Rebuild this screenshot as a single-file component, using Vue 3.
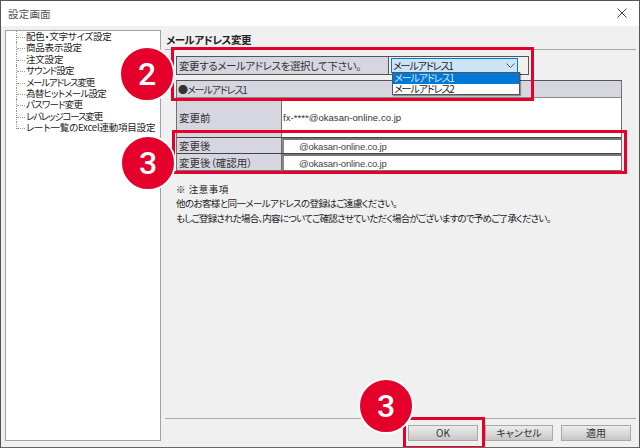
<script setup>
const items = [
  { text: '配色・文字サイズ設定', cls: '' },
  { text: '商品表示設定', cls: '' },
  { text: '注文設定', cls: '' },
  { text: 'サウンド設定', cls: 'snug' },
  { text: 'メールアドレス変更', cls: 'tight' },
  { text: '為替ヒットメール設定', cls: 'snug' },
  { text: 'パスワード変更', cls: 'snug' },
  { text: 'レバレッジコース変更', cls: 'tight' },
  { text: 'レート一覧のExcel連動項目設定', cls: '' }
]
</script>

<template>
  <div class="window">
    <div class="titlebar">
      <span class="title">設定画面</span>
      <svg class="close" width="10" height="10" viewBox="0 0 10 10"><path d="M.5.5l9 9M9.5.5l-9 9" stroke="#444" stroke-width="1" fill="none"/></svg>
    </div>
    <div class="body">
      <div class="tree">
        <ul class="tree-list">
          <li v-for="item in items" :key="item.text" class="tree-item" :class="item.cls">{{ item.text }}</li>
        </ul>
      </div>
      <div class="panel">
        <div class="heading">メールアドレス変更</div>
        <div class="rule"></div>
        <div class="content">
          <div class="select-row">
            <div class="cell label select-label">変更するメールアドレスを選択して下さい。</div>
            <div class="select-cell">
              <div class="select">
                <span class="kana">メールアドレス1</span>
                <svg width="9" height="5" viewBox="0 0 9 5"><path d="M.5.5l4 4 4-4" stroke="#555" fill="none"/></svg>
              </div>
            </div>
          </div>
          <div class="address-table">
            <div class="cell label group"><span class="dot">●</span><span class="kana">メールアドレス1</span></div>
            <div class="before-row">
              <div class="cell label before-label">変更前</div>
              <div class="before-value">fx-****@okasan-online.co.jp</div>
            </div>
            <div class="after-row">
              <div class="cell label after-label">変更後</div>
              <div class="input"><span>@okasan-online.co.jp</span></div>
            </div>
            <div class="after-row last">
              <div class="cell label after-label">変更後（確認用）</div>
              <div class="input"><span>@okasan-online.co.jp</span></div>
            </div>
          </div>
          <div class="notes">
            <p class="note-title">※ 注意事項</p>
            <p>他のお客様と同一メールアドレスの登録はご遠慮ください。</p>
            <p class="long">もしご登録された場合、内容についてご確認させていただく場合がございますので予めご了承ください。</p>
          </div>
        </div>
        <div class="footer">
          <button class="btn ok">OK</button>
          <button class="btn cancel">キャンセル</button>
          <button class="btn apply">適用</button>
        </div>
      </div>
    </div>

    <div class="dropdown">
      <div class="option selected kana">メールアドレス1</div>
      <div class="option kana">メールアドレス2</div>
    </div>

    <div class="redbox box-a"></div>
    <div class="redbox box-b"></div>
    <div class="redbox box-c"></div>
    <div class="badge badge-a">2</div>
    <div class="badge badge-b">3</div>
    <div class="badge badge-c">3</div>
  </div>
</template>

<style>
html, body { margin: 0; padding: 0; background: #f0f0f0; }
</style>

<style scoped>
.window {
  position: relative;
  width: 640px;
  height: 448px;
  box-sizing: border-box;
  overflow: hidden;
  border: 1px solid #555;
  border-bottom-color: #666;
  background: #f0f0f0;
  color: #333;
  font-family: "Noto Sans CJK JP", "Noto Sans", sans-serif;
  font-size: 10.5px;
  font-feature-settings: "palt";
  display: flex;
  flex-direction: column;
}
.kana { font-size: 10px; letter-spacing: -1.1px; }
.titlebar {
  height: 24px;
  flex: none;
  background: #fff;
  display: flex;
  align-items: center;
  justify-content: space-between;
  padding: 0 12px 1px 7px;
}
.title { font-size: 10.5px; color: #555; letter-spacing: .2px; }
.close { display: block; }
.body { flex: 1; display: flex; min-height: 0; padding: 4px 3px 6px 4px; }
.tree {
  width: 156px;
  flex: none;
  box-sizing: border-box;
  border: 1px solid #a0a0a8;
  background: #fff;
  padding: 0 0 0 10px;
}
.tree-list { list-style: none; margin: 0; padding: 0; }
.tree-item {
  position: relative;
  height: 11.4px;
  line-height: 11.4px;
  padding-left: 9px;
  white-space: nowrap;
  color: #222;
  font-size: 9.5px;
  letter-spacing: -.2px;
  border-left: 1px dotted #999;
  box-sizing: border-box;
}
.tree-item.snug { letter-spacing: -.8px; }
.tree-item.tight { letter-spacing: -1.2px; }
.tree-item::before {
  content: "";
  position: absolute;
  left: 0;
  top: 6px;
  width: 8px;
  border-top: 1px dotted #999;
}
.tree-item:last-child { height: 7px; }
.panel { flex: 1; display: flex; flex-direction: column; margin-left: 4px; min-width: 0; }
.heading { height: 19px; line-height: 19px; padding-left: 1px; font-weight: 700; font-size: 10.5px; letter-spacing: -.5px; color: #222; }
.rule { height: 1px; background: #a8a8a8; flex: none; }
.content { flex: 1; padding: 6px 0 0 11px; }
.select-row {
  display: flex;
  width: 353px;
  height: 19px;
  box-sizing: border-box;
  border: 1px solid #555;
}
.cell { box-sizing: border-box; display: flex; align-items: center; padding-left: 2px; white-space: nowrap; }
.label { background: #d6d6e0; }
.select-label { width: 212px; border-right: 1px solid #555; letter-spacing: -.4px; }
.select-cell { flex: 1; background: #f0f0f0; padding: 1px 8px 1px 2px; }
.select {
  box-sizing: border-box;
  width: 127px;
  height: 15px;
  background: #cce4f7;
  border: 1px solid #0078d7;
  display: flex;
  align-items: center;
  justify-content: space-between;
  padding: 0 2px 0 1px;
  color: #222;
}
.address-table {
  margin-top: 5px;
  width: 446px;
  box-sizing: border-box;
  border: 1px solid #707070;
  border-top-color: #555;
  border-bottom-width: 2px;
  border-right-width: 1px;
}
.group { height: 17px; padding-left: 1px; border-bottom: 1px solid #8a8a8a; }
.dot { font-size: 10px; margin-right: -1px; }
.before-row { display: flex; height: 39px; background: #fff; }
.before-label { width: 105px; border-right: 1px solid #707070; }
.before-value { display: flex; align-items: center; padding-left: 1px; color: #333; letter-spacing: .05px; font-size: 9.5px; font-family: "Liberation Sans", sans-serif; }
.after-row { display: flex; height: 16px; border-top: 1px solid #444; box-sizing: border-box; }
.after-row.last { height: 17px; }
.after-label { width: 105px; border-right: 1px solid #707070; }
.input {
  flex: 1;
  background: #fff;
  box-sizing: border-box;
  border-top: 2px solid #777;
  border-left: 2px solid #888;
  display: flex;
  align-items: center;
  padding-left: 15px;
  font-family: "Liberation Sans", sans-serif;
  font-size: 9.5px;
  letter-spacing: -.2px;
  color: #444;
}
.notes { margin-top: 10px; color: #222; font-size: 9.5px; letter-spacing: -.6px; }
.notes p { margin: 0; height: 14.4px; line-height: 14.4px; white-space: nowrap; }
.notes .note-title { letter-spacing: .5px; }
.notes .long { letter-spacing: -.8px; }
.footer {
  flex: none;
  height: 23px;
  box-sizing: border-box;
  border-top: 1px solid #a8a8a8;
  display: flex;
  padding: 6px 0 0 243px;
}
.btn {
  box-sizing: border-box;
  height: 16px;
  padding: 0;
  border: 1px solid #a8a8a8;
  background: linear-gradient(#ededed, #dcdcdc 45%, #c6c6c6);
  font: inherit;
  font-feature-settings: "palt";
  font-size: 10px;
  line-height: 14px;
  color: #333;
  text-align: center;
}
.ok { width: 70px; margin-right: 7px; }
.cancel { width: 68px; margin-right: 8px; }
.apply { width: 70px; }
.dropdown {
  position: absolute;
  left: 391px;
  top: 71px;
  width: 128px;
  box-sizing: border-box;
  border: 1px solid #555;
  background: #fff;
  box-shadow: 1px 1px 1px rgba(0,0,0,.35);
  color: #222;
}
.option { height: 10.5px; line-height: 10.5px; padding-left: 1px; white-space: nowrap; }
.option.selected { background: #0078d7; color: #cfe6fa; }
.redbox { position: absolute; box-sizing: border-box; border: 3px solid #e4002b; }
.box-a { left: 170px; top: 46px; width: 363px; height: 54px; }
.box-b { left: 171px; top: 129px; width: 455px; height: 44px; }
.box-c { left: 402px; top: 416px; width: 82px; height: 32px; }
.badge {
  position: absolute;
  width: 52px;
  height: 52px;
  box-sizing: content-box;
  border: 2px solid #fff;
  border-radius: 50%;
  background: #e4002b;
  color: #fff;
  font-family: "Roboto", "Liberation Sans", sans-serif;
  font-size: 32px;
  font-weight: 500;
  line-height: 52px;
  text-align: center;
}
.badge-a { left: 118px; top: 45px; }
.badge-b { left: 119px; top: 134px; }
.badge-c { left: 357px; top: 377px; }
</style>
